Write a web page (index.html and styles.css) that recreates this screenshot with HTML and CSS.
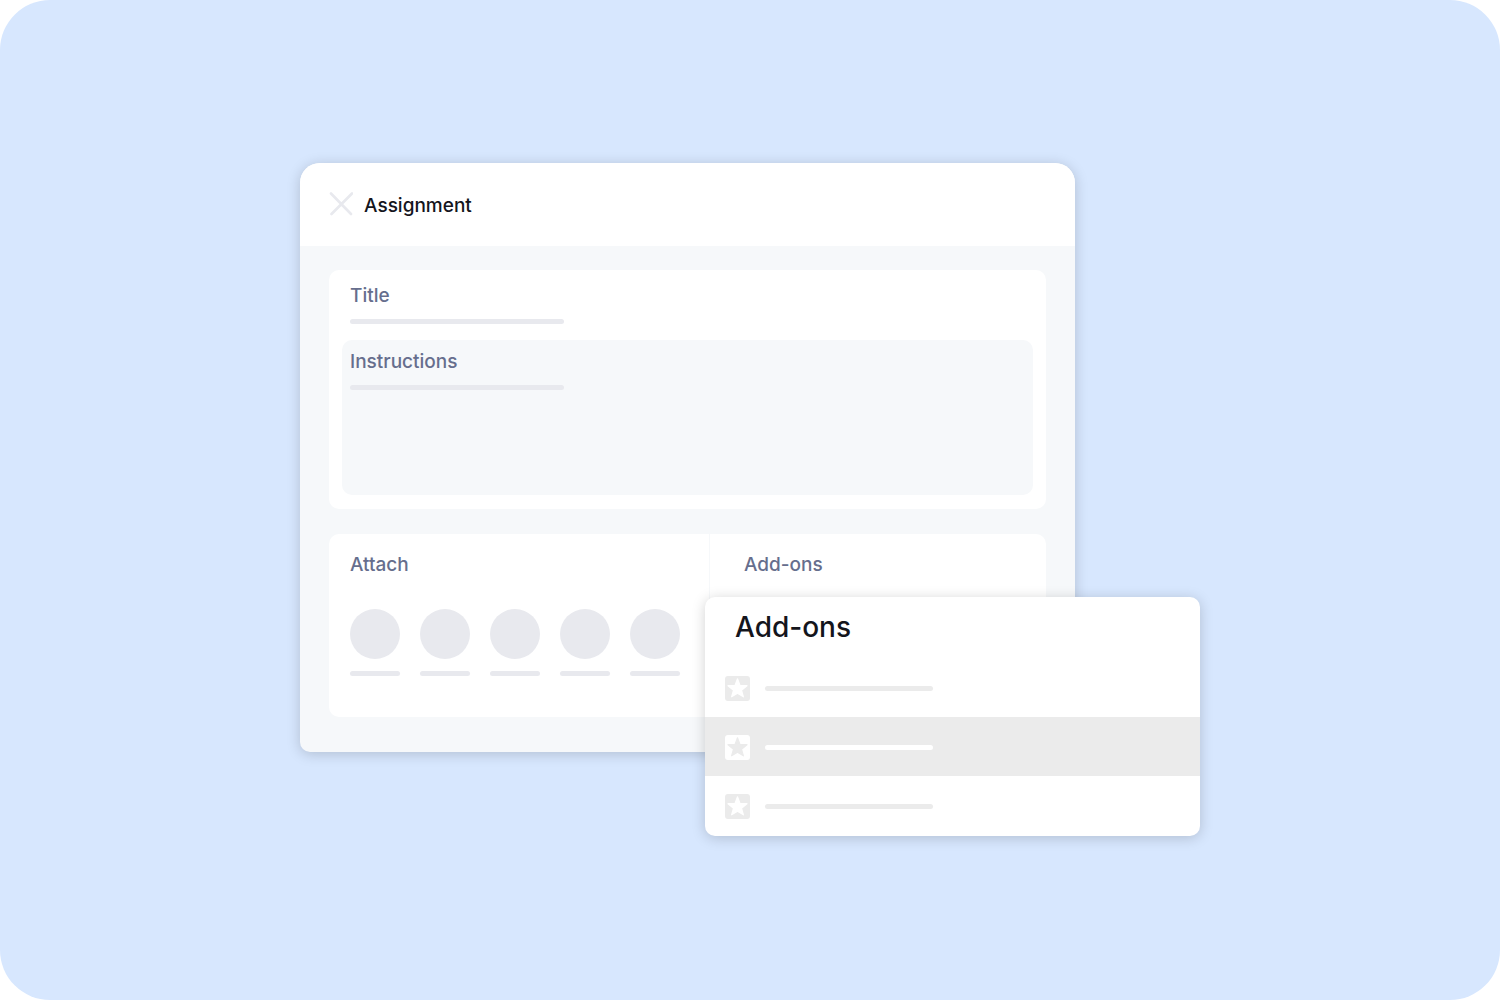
FILE: index.html
```html
<!DOCTYPE html>
<html lang="en">
<head>
  <meta charset="UTF-8" />
  <meta name="viewport" content="width=device-width, initial-scale=1" />
  <title>Assignment</title>
  <link rel="stylesheet" href="styles.css">
</head>
<body>

<svg width="0" height="0" class="sprite" aria-hidden="true">
  <symbol id="star" viewBox="0 0 25 25">
    <path d="M12.5 2.8 L15 9.5 L22 9.7 L16.5 14.2 L18.4 20.8 L12.5 17.2 L6.6 20.8 L8.5 14.2 L3 9.7 L10 9.5 Z" stroke-width="1.2" stroke-linejoin="round" />
  </symbol>
</svg>

<main class="stage">
  <div class="scene">

    <form class="dialog">
      <header class="dialog-header">
        <button type="button" class="close" aria-label="Close">
          <svg width="24" height="24" viewBox="0 0 24 24">
            <path d="M2 1.5 L22 22 M23 1.5 L2.5 22" fill="none" stroke="currentColor" stroke-width="2.6" stroke-linecap="round" />
          </svg>
        </button>
        <h1>Assignment</h1>
      </header>

      <div class="dialog-body">
        <section class="card details">
          <div class="field">
            <label for="title">Title</label>
            <input type="text" id="title" class="bar" />
          </div>
          <div class="field field-box">
            <label for="instructions">Instructions</label>
            <textarea id="instructions" class="bar" rows="1"></textarea>
          </div>
        </section>

        <section class="card sources">
          <div class="attach">
            <h2>Attach</h2>
            <div class="attach-list">
              <button type="button" aria-label="Attach item 1"><span class="circle"></span><span class="bar"></span></button>
              <button type="button" aria-label="Attach item 2"><span class="circle"></span><span class="bar"></span></button>
              <button type="button" aria-label="Attach item 3"><span class="circle"></span><span class="bar"></span></button>
              <button type="button" aria-label="Attach item 4"><span class="circle"></span><span class="bar"></span></button>
              <button type="button" aria-label="Attach item 5"><span class="circle"></span><span class="bar"></span></button>
            </div>
          </div>
          <div class="addons">
            <h2>Add-ons</h2>
          </div>
        </section>
      </div>
    </form>

    <aside class="menu">
      <h2>Add-ons</h2>
      <button type="button" class="menu-row" aria-label="Add-on 1">
        <svg class="star" width="25" height="25"><use href="#star" /></svg>
        <span class="bar"></span>
      </button>
      <button type="button" class="menu-row active" aria-label="Add-on 2">
        <svg class="star" width="25" height="25"><use href="#star" /></svg>
        <span class="bar"></span>
      </button>
      <button type="button" class="menu-row" aria-label="Add-on 3">
        <svg class="star" width="25" height="25"><use href="#star" /></svg>
        <span class="bar"></span>
      </button>
    </aside>

  </div>
</main>

</body>
</html>
```

FILE: styles.css
```css
* { box-sizing: border-box; }
body {
  margin: 0;
  font-family: Inter, "Liberation Sans", sans-serif;
  font-size: 19px;
  line-height: 24px;
  color: #14151c;
  background: #fff;
}
h1, h2 {
  margin: 0;
  font-size: 19px;
  font-weight: 500;
}
h1 {
  line-height: 28px;
}
button {
  padding: 0;
  border: 0;
  background: none;
  font: inherit;
  cursor: pointer;
}
.sprite {
  position: absolute;
}
.stage {
  min-height: 100vh;
  display: flex;
  align-items: center;
  justify-content: center;
  padding-bottom: 1px;
  background: #d7e7fe;
  border-radius: 50px;
}
.scene {
  position: relative;
  width: 60%;
  padding: 0 125px 84px 0;
}

/* dialog */
.dialog {
  background: #f6f8fa;
  border-radius: 20px 20px 10px 10px;
  box-shadow: 0 2px 14px rgba(0, 0, 0, 0.18);
}
.dialog-header {
  display: flex;
  align-items: flex-start;
  gap: 11px;
  padding: 29px 29px 26px;
  background: #fff;
  border-radius: 20px 20px 0 0;
}
.close {
  height: 24px;
  color: #e8e9ee;
}
.close svg {
  display: block;
}
.dialog-body {
  display: flex;
  flex-direction: column;
  gap: 25px;
  padding: 24px 29px 35px;
}
.card {
  background: #fff;
  border-radius: 10px;
}
.card h2, .card label {
  color: #666e8d;
  font-weight: 500;
}
.bar {
  display: block;
  height: 5px;
  border: 0;
  border-radius: 3px;
  background: #e8e9ee;
}

.details {
  padding: 14px 13px;
}
.field {
  display: flex;
  flex-direction: column;
  gap: 11px;
  padding: 0 8px;
}
.field .bar {
  width: 214px;
  padding: 0;
  resize: none;
  overflow: hidden;
}
.field-box {
  min-height: 155px;
  margin-top: 16px;
  padding-top: 10px;
  background: #f6f8fa;
  border-radius: 10px;
}

.sources {
  display: flex;
  min-height: 183px;
}
.attach {
  padding: 19px 29px 0 21px;
  border-right: 1px solid #f6f8fa;
}
.addons {
  flex: 1;
  padding: 19px 34px 0;
}
.attach-list {
  display: flex;
  gap: 20px;
  margin-top: 32px;
}
.circle {
  display: block;
  width: 50px;
  height: 50px;
  margin-bottom: 12px;
  border-radius: 50%;
  background: #e8e9ee;
}

/* add-ons menu, lies over the dialog corner */
.menu {
  position: absolute;
  right: 0;
  bottom: 0;
  width: 55%;
  padding-bottom: 1px;
  background: #fff;
  border-radius: 10px;
  box-shadow: 0 2px 14px rgba(0, 0, 0, 0.18);
}
.menu h2 {
  padding: 12px 30px 13px;
  font-size: 28px;
  line-height: 36px;
}
.menu-row {
  display: flex;
  align-items: center;
  gap: 15px;
  width: 100%;
  padding: 18px 20px 16px;
}
.menu-row .bar {
  width: 168px;
  background: #ebebeb;
}
.star {
  border-radius: 3px;
  background: #ebebeb;
  fill: #fff;
  stroke: #fff;
}
.menu-row.active {
  background: #ebebeb;
}
.menu-row.active .bar {
  background: #fff;
}
.menu-row.active .star {
  background: #fff;
  fill: #ebebeb;
  stroke: #ebebeb;
}
```
